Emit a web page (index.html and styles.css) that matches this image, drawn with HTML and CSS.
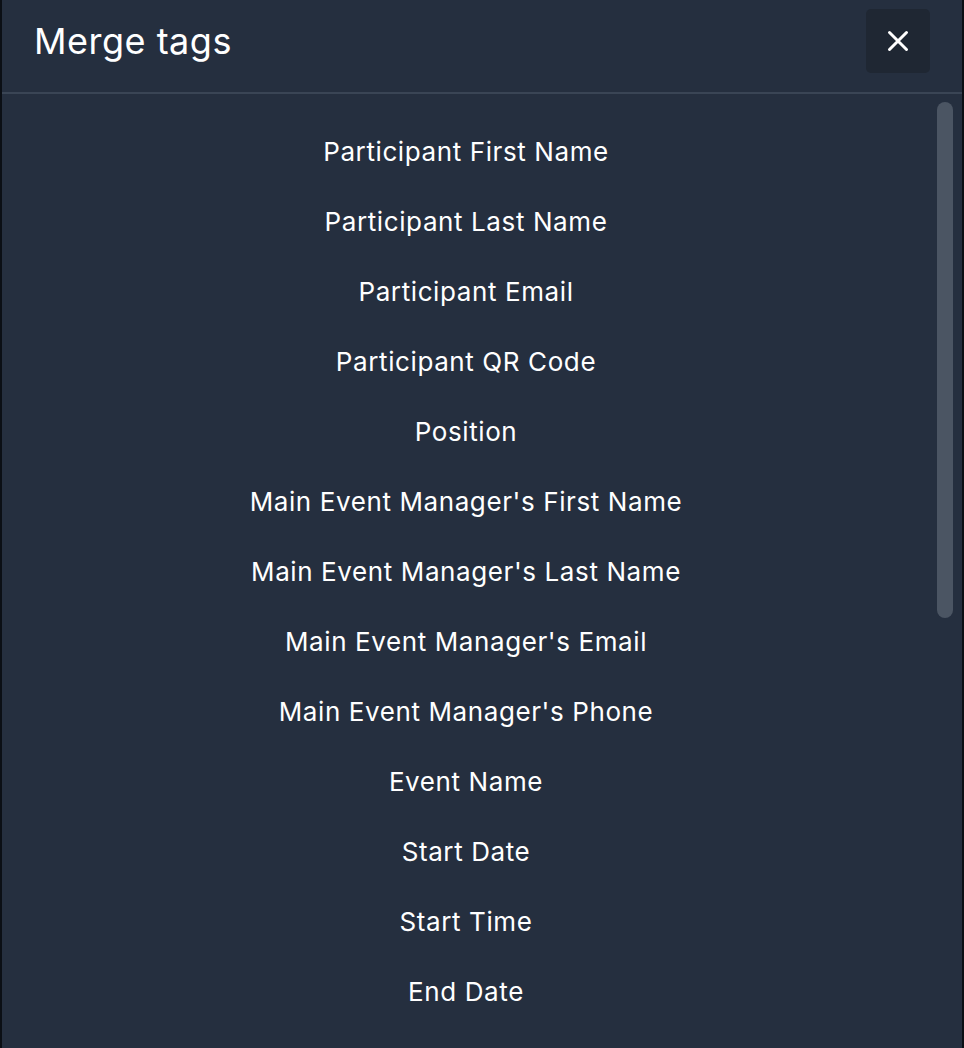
FILE: index.html
```html
<!DOCTYPE html>
<html>
<head>
<meta charset="utf-8">
<link rel="stylesheet" href="styles.css">
</head>
<body>
<div class="modal">
  <header class="modal-header">
    <h1 class="modal-title">Merge tags</h1>
    <button class="close-btn" aria-label="Close">
      <svg width="24" height="24" viewBox="0 0 24 24" fill="none" stroke="#ffffff" stroke-width="3" stroke-linecap="round"><path d="M3.5 3.5L20.5 20.5M20.5 3.5L3.5 20.5"/></svg>
    </button>
  </header>
  <div class="modal-body">
    <div class="scroll-view">
      <ul class="tag-list">
        <li>Participant First Name</li>
        <li>Participant Last Name</li>
        <li>Participant Email</li>
        <li>Participant QR Code</li>
        <li>Position</li>
        <li>Main Event Manager's First Name</li>
        <li>Main Event Manager's Last Name</li>
        <li>Main Event Manager's Email</li>
        <li>Main Event Manager's Phone</li>
        <li>Event Name</li>
        <li>Start Date</li>
        <li>Start Time</li>
        <li>End Date</li>
      </ul>
    </div>
    <div class="scroll-track"><div class="scroll-thumb"></div></div>
  </div>
</div>
</body>
</html>
```
FILE: styles.css
```css
* { box-sizing: border-box; }
html, body { margin: 0; padding: 0; background: #0b0f15; }
.modal {
  width: 964px;
  height: 1048px;
  background: #252f3f;
  border-left: 2px solid #0b0f15;
  border-right: 2px solid #0b0f15;
  display: flex;
  flex-direction: column;
  font-family: Inter, "Liberation Sans", sans-serif;
  color: #ffffff;
  overflow: hidden;
}
.modal-header {
  height: 94px;
  flex: none;
  display: flex;
  align-items: center;
  justify-content: space-between;
  padding: 0 32px 10px 32px;
  border-bottom: 2px solid #3a4555;
}
.modal-title {
  margin: 0;
  font-size: 36px;
  font-weight: 400;
  letter-spacing: 0.5px;
}
.close-btn {
  width: 64px;
  height: 64px;
  border: none;
  border-radius: 5px;
  background: #1f2733;
  display: flex;
  align-items: center;
  justify-content: center;
  padding: 0;
}
.modal-body {
  flex: 1;
  min-height: 0;
  display: flex;
}
.scroll-view {
  flex: 1;
  overflow: hidden;
}
.scroll-track {
  width: 32px;
  flex: none;
  padding: 8px 9px 0 7px;
}
.scroll-thumb {
  width: 16px;
  height: 516px;
  border-radius: 8px;
  background: #4b5563;
}
.tag-list {
  list-style: none;
  margin: 0;
  padding: 39px 0 0 0;
}
.tag-list li {
  height: 70px;
  line-height: 37px;
  text-align: center;
  font-size: 26px;
  letter-spacing: 0.6px;
  font-weight: 400;
}
```
